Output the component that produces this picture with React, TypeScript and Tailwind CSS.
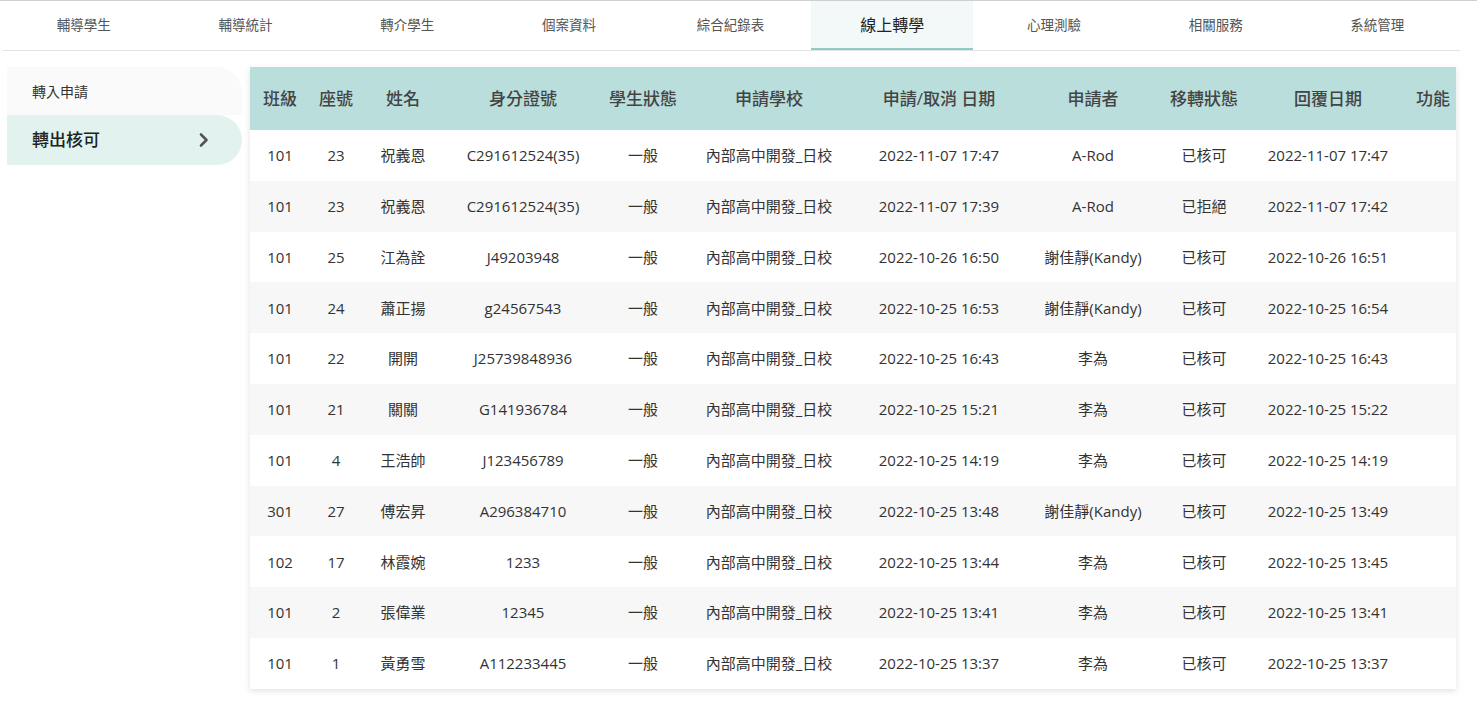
import React from 'react';

const tabs = ['輔導學生', '輔導統計', '轉介學生', '個案資料', '綜合紀錄表', '線上轉學', '心理測驗', '相關服務', '系統管理'];

const columns = [
  { label: '班級', width: 60 },
  { label: '座號', width: 52 },
  { label: '姓名', width: 82 },
  { label: '身分證號', width: 158 },
  { label: '學生狀態', width: 82 },
  { label: '申請學校', width: 170 },
  { label: '申請/取消 日期', width: 170 },
  { label: '申請者', width: 138 },
  { label: '移轉狀態', width: 84 },
  { label: '回覆日期', width: 164 },
  { label: '功能', width: 46 },
];

const rows = [
  ['101', '23', '祝義恩', 'C291612524(35)', '2022-11-07 17:47', 'A-Rod', '已核可', '2022-11-07 17:47'],
  ['101', '23', '祝義恩', 'C291612524(35)', '2022-11-07 17:39', 'A-Rod', '已拒絕', '2022-11-07 17:42'],
  ['101', '25', '江為詮', 'J49203948', '2022-10-26 16:50', '謝佳靜(Kandy)', '已核可', '2022-10-26 16:51'],
  ['101', '24', '蕭正揚', 'g24567543', '2022-10-25 16:53', '謝佳靜(Kandy)', '已核可', '2022-10-25 16:54'],
  ['101', '22', '開開', 'J25739848936', '2022-10-25 16:43', '李為', '已核可', '2022-10-25 16:43'],
  ['101', '21', '關關', 'G141936784', '2022-10-25 15:21', '李為', '已核可', '2022-10-25 15:22'],
  ['101', '4', '王浩帥', 'J123456789', '2022-10-25 14:19', '李為', '已核可', '2022-10-25 14:19'],
  ['301', '27', '傅宏昇', 'A296384710', '2022-10-25 13:48', '謝佳靜(Kandy)', '已核可', '2022-10-25 13:49'],
  ['102', '17', '林霞婉', '1233', '2022-10-25 13:44', '李為', '已核可', '2022-10-25 13:45'],
  ['101', '2', '張偉業', '12345', '2022-10-25 13:41', '李為', '已核可', '2022-10-25 13:41'],
  ['101', '1', '黃勇雪', 'A112233445', '2022-10-25 13:37', '李為', '已核可', '2022-10-25 13:37'],
];

export default function App() {
  return (
    <div
      className="min-h-[705px] w-[1477px] bg-white text-[#333]"
      style={{ fontFamily: '"Open Sans", "Noto Sans CJK TC", sans-serif' }}
    >
      <div className="border-t border-[#cfcfcf] pl-[3px] pr-[17px]">
        <nav className="flex h-[50px] border-b border-[#e2e2e2]">
          {tabs.map((t) => {
            const active = t === '線上轉學';
            return (
              <div
                key={t}
                className={`flex w-[161.7px] items-center justify-center ${
                  active
                    ? 'border-b-2 border-[#8ecdc6] bg-[#f3f9f8] text-[16px] text-[#222]'
                    : 'text-[13.5px] text-[#555]'
                }`}
              >
                {t}
              </div>
            );
          })}
        </nav>
      </div>

      <div className="flex gap-2 pl-[7px] pt-4">
        <aside className="w-[235px] shrink-0">
          <div className="flex h-12 items-center rounded-tr-[25px] bg-[#fafafa] pl-[25px] text-[14px] text-[#333]">
            轉入申請
          </div>
          <div className="flex h-[50px] items-center justify-between rounded-r-[25px] bg-[#e1f2ef] pl-[25px] pr-[32px] text-[17px] font-medium text-[#222]">
            <span>轉出核可</span>
            <svg width="12" height="16" viewBox="0 0 12 16" fill="none">
              <path d="M3 2.5l5.5 5.5L3 13.5" stroke="#555" strokeWidth="2.6" strokeLinecap="round" strokeLinejoin="round" />
            </svg>
          </div>
        </aside>

        <div className="w-[1206px] shadow-[0_2px_6px_rgba(0,0,0,0.12)]">
          <table className="w-full table-fixed border-collapse">
            <colgroup>
              {columns.map((c) => (
                <col key={c.label} style={{ width: c.width }} />
              ))}
            </colgroup>
            <thead>
              <tr className="h-[63px] bg-[#b9dedc]">
                {columns.map((c) => (
                  <th key={c.label} className="whitespace-nowrap text-center text-[17px] font-medium text-[#444]">
                    {c.label}
                  </th>
                ))}
              </tr>
            </thead>
            <tbody>
              {rows.map((r, i) => (
                <tr key={i} className={`h-[50.8px] text-[15px] text-[#333] ${i % 2 === 1 ? 'bg-[#f7f7f7]' : 'bg-white'}`}>
                  <td className="text-center">{r[0]}</td>
                  <td className="text-center">{r[1]}</td>
                  <td className="text-center">{r[2]}</td>
                  <td className="text-center">{r[3]}</td>
                  <td className="text-center">一般</td>
                  <td className="text-center">內部高中開發_日校</td>
                  <td className="text-center">{r[4]}</td>
                  <td className="text-center">{r[5]}</td>
                  <td className="text-center">{r[6]}</td>
                  <td className="text-center">{r[7]}</td>
                  <td />
                </tr>
              ))}
            </tbody>
          </table>
        </div>
      </div>
    </div>
  );
}
